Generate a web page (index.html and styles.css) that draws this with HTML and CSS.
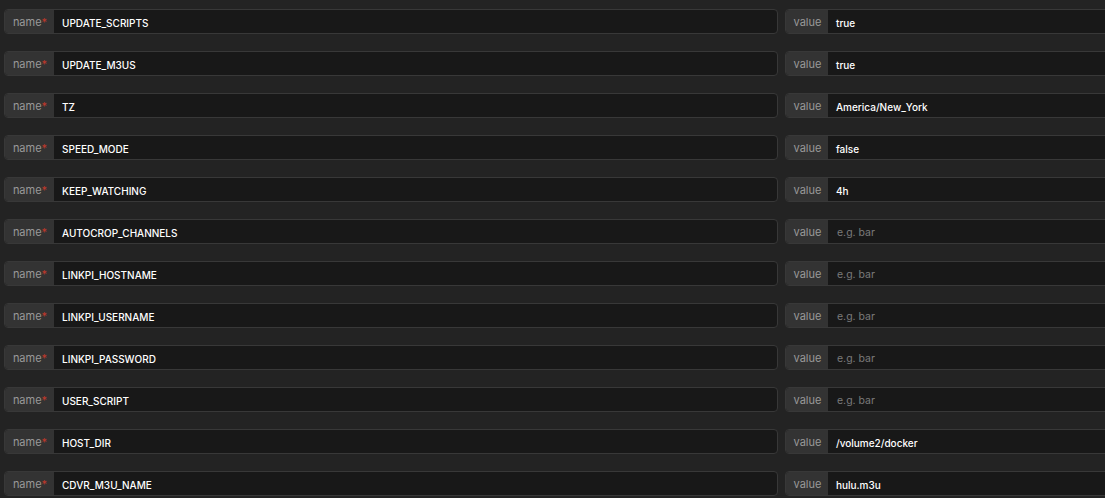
FILE: index.html
```html
<!DOCTYPE html>
<html>
<head>
<meta charset="utf-8">
<link rel="stylesheet" href="styles.css">
</head>
<body>
<div class="list">
  <div class="row">
    <div class="field"><span class="label">name<span class="req">*</span></span><span class="input">UPDATE_SCRIPTS</span></div>
    <div class="field"><span class="label">value</span><span class="input">true</span></div>
  </div>
  <div class="row">
    <div class="field"><span class="label">name<span class="req">*</span></span><span class="input">UPDATE_M3US</span></div>
    <div class="field"><span class="label">value</span><span class="input">true</span></div>
  </div>
  <div class="row">
    <div class="field"><span class="label">name<span class="req">*</span></span><span class="input">TZ</span></div>
    <div class="field"><span class="label">value</span><span class="input">America/New_York</span></div>
  </div>
  <div class="row">
    <div class="field"><span class="label">name<span class="req">*</span></span><span class="input">SPEED_MODE</span></div>
    <div class="field"><span class="label">value</span><span class="input">false</span></div>
  </div>
  <div class="row">
    <div class="field"><span class="label">name<span class="req">*</span></span><span class="input">KEEP_WATCHING</span></div>
    <div class="field"><span class="label">value</span><span class="input">4h</span></div>
  </div>
  <div class="row">
    <div class="field"><span class="label">name<span class="req">*</span></span><span class="input">AUTOCROP_CHANNELS</span></div>
    <div class="field"><span class="label">value</span><span class="input placeholder">e.g. bar</span></div>
  </div>
  <div class="row">
    <div class="field"><span class="label">name<span class="req">*</span></span><span class="input">LINKPI_HOSTNAME</span></div>
    <div class="field"><span class="label">value</span><span class="input placeholder">e.g. bar</span></div>
  </div>
  <div class="row">
    <div class="field"><span class="label">name<span class="req">*</span></span><span class="input">LINKPI_USERNAME</span></div>
    <div class="field"><span class="label">value</span><span class="input placeholder">e.g. bar</span></div>
  </div>
  <div class="row">
    <div class="field"><span class="label">name<span class="req">*</span></span><span class="input">LINKPI_PASSWORD</span></div>
    <div class="field"><span class="label">value</span><span class="input placeholder">e.g. bar</span></div>
  </div>
  <div class="row">
    <div class="field"><span class="label">name<span class="req">*</span></span><span class="input">USER_SCRIPT</span></div>
    <div class="field"><span class="label">value</span><span class="input placeholder">e.g. bar</span></div>
  </div>
  <div class="row">
    <div class="field"><span class="label">name<span class="req">*</span></span><span class="input">HOST_DIR</span></div>
    <div class="field"><span class="label">value</span><span class="input">/volume2/docker</span></div>
  </div>
  <div class="row">
    <div class="field"><span class="label">name<span class="req">*</span></span><span class="input">CDVR_M3U_NAME</span></div>
    <div class="field"><span class="label">value</span><span class="input">hulu.m3u</span></div>
  </div>
</div>
</body>
</html>
```
FILE: styles.css
```css
html, body {
  margin: 0;
  padding: 0;
  background: #232323;
  overflow: hidden;
}
body {
  font-family: Inter, "Noto Sans", sans-serif;
  font-size: 11px;
}
.list {
  display: flex;
  flex-direction: column;
  gap: 17px;
  padding: 9px 0 0 4px;
  width: 1555px;
}
.row {
  display: grid;
  grid-template-columns: 774px 774px;
  gap: 7px;
}
.field {
  display: flex;
  height: 25px;
  box-sizing: border-box;
  border: 1px solid #383838;
  border-radius: 4px;
  overflow: hidden;
  background: #181818;
}
.label {
  display: flex;
  align-items: center;
  justify-content: center;
  width: 49px;
  flex: none;
  padding: 1px 0 0 1px;
  box-sizing: border-box;
  background: #333333;
  color: #999999;
  font-size: 11px;
}
.field + .field .label {
  width: 42px;
}
.req {
  color: #c0392b;
}
.input {
  display: flex;
  align-items: center;
  padding-left: 8px;
  padding-top: 2px;
  color: #ffffff;
  font-size: 10px;
  font-weight: 500;
}
.placeholder {
  color: #7a7a7a;
  font-size: 10.5px;
  font-weight: 400;
  padding-left: 9px;
}
```
